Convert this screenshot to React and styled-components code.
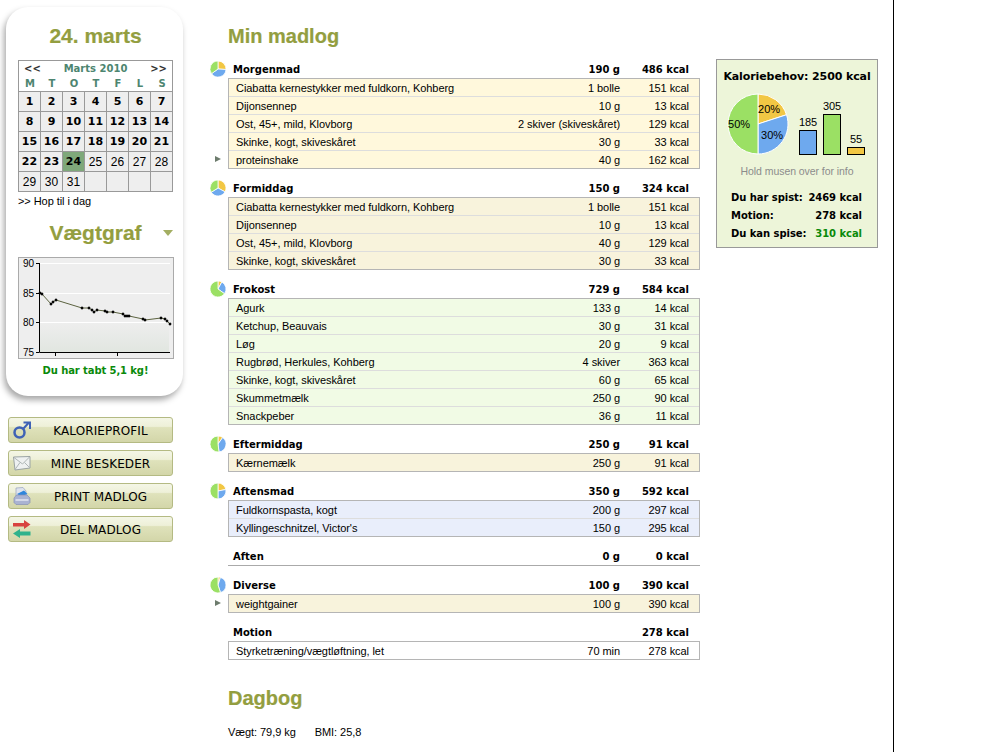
import styled, { createGlobalStyle } from 'styled-components';

const GlobalStyle = createGlobalStyle`
	html, body {
		margin: 0;
		padding: 0;
		background: #fff;
	}
	body {
		font-family: "Liberation Sans", Tahoma, sans-serif;
		font-size: 11px;
		letter-spacing: -0.06px;
		color: #000;
		overflow: hidden;
	}
`;

const BOLD_FONT = '"DejaVu Sans", Tahoma, sans-serif';
const COLORS = { green: '#9be064', yellow: '#f2c744', blue: '#6ea9ee' };

// slices: [yellow, blue, green], clockwise from 12 o'clock
const meals = [
	{
		name: 'Morgenmad', grams: '190 g', kcal: '486 kcal', tone: 'yellow',
		pie: [26, 39, 35],
		rows: [
			['Ciabatta kernestykker med fuldkorn, Kohberg', '1 bolle', '151 kcal'],
			['Dijonsennep', '10 g', '13 kcal'],
			['Ost, 45+, mild, Klovborg', '2 skiver (skiveskåret)', '129 kcal'],
			['Skinke, kogt, skiveskåret', '30 g', '33 kcal'],
			['proteinshake', '40 g', '162 kcal', true],
		],
	},
	{
		name: 'Formiddag', grams: '150 g', kcal: '324 kcal', tone: 'tan',
		pie: [33, 33, 34],
		rows: [
			['Ciabatta kernestykker med fuldkorn, Kohberg', '1 bolle', '151 kcal'],
			['Dijonsennep', '10 g', '13 kcal'],
			['Ost, 45+, mild, Klovborg', '40 g', '129 kcal'],
			['Skinke, kogt, skiveskåret', '30 g', '33 kcal'],
		],
	},
	{
		name: 'Frokost', grams: '729 g', kcal: '584 kcal', tone: 'green',
		pie: [8, 27, 65],
		rows: [
			['Agurk', '133 g', '14 kcal'],
			['Ketchup, Beauvais', '30 g', '31 kcal'],
			['Løg', '20 g', '9 kcal'],
			['Rugbrød, Herkules, Kohberg', '4 skiver', '363 kcal'],
			['Skinke, kogt, skiveskåret', '60 g', '65 kcal'],
			['Skummetmælk', '250 g', '90 kcal'],
			['Snackpeber', '36 g', '11 kcal'],
		],
	},
	{
		name: 'Eftermiddag', grams: '250 g', kcal: '91 kcal', tone: 'tan',
		pie: [10, 38, 52],
		rows: [['Kærnemælk', '250 g', '91 kcal']],
	},
	{
		name: 'Aftensmad', grams: '350 g', kcal: '592 kcal', tone: 'blue',
		pie: [22, 28, 50],
		rows: [
			['Fuldkornspasta, kogt', '200 g', '297 kcal'],
			['Kyllingeschnitzel, Victor\'s', '150 g', '295 kcal'],
		],
	},
	{ name: 'Aften', grams: '0 g', kcal: '0 kcal', rows: [] },
	{
		name: 'Diverse', grams: '100 g', kcal: '390 kcal', tone: 'tan',
		pie: [5, 40, 55],
		rows: [['weightgainer', '100 g', '390 kcal', true]],
	},
	{
		name: 'Motion', grams: '', kcal: '278 kcal', tone: 'white',
		rows: [['Styrketræning/vægtløftning, let', '70 min', '278 kcal']],
	},
];

const calendarDays = Array.from({ length: 31 }, (_, i) => i + 1);

const slicePath = (cx, cy, r, from, to) => {
	const a0 = (from / 100) * 2 * Math.PI - Math.PI / 2;
	const a1 = (to / 100) * 2 * Math.PI - Math.PI / 2;
	const large = to - from > 50 ? 1 : 0;
	return `M${cx} ${cy}L${cx + r * Math.cos(a0)} ${cy + r * Math.sin(a0)}A${r} ${r} 0 ${large} 1 ${cx + r * Math.cos(a1)} ${cy + r * Math.sin(a1)}Z`;
};

const MiniPie = ({ slices }) => {
	const [yellow, blue] = slices;
	return (
		<PieIcon width='16' height='16' viewBox='0 0 16 16'>
			<path d={slicePath(8, 8, 8, 0, yellow)} fill={COLORS.yellow} stroke='#fff' strokeWidth='0.8' />
			<path d={slicePath(8, 8, 8, yellow, yellow + blue)} fill={COLORS.blue} stroke='#fff' strokeWidth='0.8' />
			<path d={slicePath(8, 8, 8, yellow + blue, 100)} fill={COLORS.green} stroke='#fff' strokeWidth='0.8' />
		</PieIcon>
	);
};

const weightPoints = [
	[40, 293], [42, 294], [51, 304], [53, 302], [56, 300], [82, 308], [89, 308], [92, 310],
	[94, 312], [97, 310], [105, 311], [107, 312], [113, 312], [123, 314], [125, 316], [127, 316],
	[129, 316], [143, 319], [145, 320], [161, 318], [165, 319], [167, 321], [170, 324],
];

const WeightChart = () => (
	<ChartFrame>
		<svg width='154' height='100' viewBox='19 258 154 100' style={{ display: 'block' }}>
			<defs>
				<linearGradient id='fade' x1='0' y1='0' x2='0' y2='1'>
					<stop offset='0' stopColor='#eeeeee' />
					<stop offset='1' stopColor='#e1e6e0' />
				</linearGradient>
			</defs>
			<rect x='19' y='258' width='154' height='100' fill='#eeeeee' />
			<rect x='40' y='322' width='129' height='30' fill='url(#fade)' />
			<path d='M39 263.5H170M39 293.5H170M39 322.5H170' stroke='#fff' strokeWidth='1' />
			<path d='M39.5 263V352.500H170M36 263.500H39M36 293.500H39M36 322.500H39M36 352.500H39M55.500 352V356M117.500 352V356' stroke='#000' strokeWidth='1' fill='none' />
			<g fontFamily='"Liberation Sans", sans-serif' fontSize='10' fill='#000' textAnchor='end'>
				<text x='34' y='267'>90</text>
				<text x='34' y='297'>85</text>
				<text x='34' y='326'>80</text>
				<text x='34' y='356'>75</text>
			</g>
			<polyline points={weightPoints.map((p) => p.join(',')).join(' ')} fill='none' stroke='#5c6340' strokeWidth='1' />
			{weightPoints.map(([x, y]) => (
				<rect key={`${x}-${y}`} x={x - 1.2} y={y - 1.2} width='2.4' height='2.4' fill='#000' transform={`rotate(45 ${x} ${y})`} />
			))}
		</svg>
	</ChartFrame>
);

const EnergyChart = () => (
	<EnergyWrap width='146' height='66' viewBox='724 92 146 66'>
		<path d={slicePath(758, 124, 30, 0, 20)} fill={COLORS.yellow} stroke='#fff' />
		<path d={slicePath(758, 124, 30, 20, 50)} fill={COLORS.blue} stroke='#fff' />
		<path d={slicePath(758, 124, 30, 50, 100)} fill={COLORS.green} stroke='#fff' />
		<g fontFamily='"Liberation Sans", sans-serif' fontSize='11' fill='#000' textAnchor='middle'>
			<text x='769' y='113'>20%</text>
			<text x='772' y='139'>30%</text>
			<text x='739' y='128'>50%</text>
			<text x='808' y='126'>185</text>
			<text x='832' y='110'>305</text>
			<text x='856' y='143'>55</text>
		</g>
		<rect x='799.5' y='130.5' width='17' height='24' fill={COLORS.blue} stroke='#000' />
		<rect x='823.5' y='114.5' width='17' height='40' fill={COLORS.green} stroke='#000' />
		<rect x='847.5' y='147.5' width='17' height='7' fill={COLORS.yellow} stroke='#000' />
	</EnergyWrap>
);

const GenderIcon = () => (
	<svg width='18' height='18' viewBox='0 0 18 18'>
		<circle cx='6.500' cy='11.500' r='5' fill='none' stroke='#3f62b5' strokeWidth='2.500' />
		<path d='M10 8L15.500 2M10.500 1.500H17V8' fill='none' stroke='#3f62b5' strokeWidth='2' />
	</svg>
);

const MailIcon = () => (
	<svg width='18' height='15' viewBox='0 0 18 15'>
		<path d='M0.500 1L17 0.500V12L2 14Z' fill='#eef1f1' stroke='#9aa3a3' />
		<path d='M1 1.500L9.500 8L16.500 1M2 13.500L7 6.500M16.500 11.500L11.500 6.500' fill='none' stroke='#aeb6b6' />
	</svg>
);

const PrinterIcon = () => (
	<svg width='18' height='18' viewBox='0 0 18 18'>
		<path d='M3 1L10 0.500L13 4V9H3Z' fill='#dfe4ee' stroke='#97a1bd' strokeWidth='0.7' />
		<path d='M4 7L11 3.500L14.500 7L8 9.500Z' fill='#2f86dc' />
		<path d='M1 11L3.500 8H14L17 11V15.500L15 17.500H3L1 15.500Z' fill='#aab3d2' stroke='#8791b4' strokeWidth='0.7' />
		<path d='M2.500 13H15.500' stroke='#e2e6f0' strokeWidth='1.500' />
	</svg>
);

const ShareIcon = () => (
	<svg width='18' height='18' viewBox='0 0 18 18'>
		<path d='M0 3H11V0L17.500 4.500L11 9V6.500H0Z' fill='#d8433f' />
		<path d='M17.500 11.500H7V9L0 13.500L7 18V15.500H17.500Z' fill='#2fb28c' />
	</svg>
);

const App = () => (
	<>
		<GlobalStyle />
		<Page>
			<Sidebar>
				<Card>
					<DateTitle>24. marts</DateTitle>
					<Calendar>
						<CalendarNav>
							<span>&lt;&lt;</span>
							<CalendarMonth>Marts 2010</CalendarMonth>
							<span>&gt;&gt;</span>
						</CalendarNav>
						<WeekRow>
							{['M', 'T', 'O', 'T', 'F', 'L', 'S'].map((d, i) => (
								<span key={i}>{d}</span>
							))}
						</WeekRow>
						<DayGrid>
							{calendarDays.map((d) => (
								<Day key={d} $logged={d <= 24} $today={d === 24}>{d}</Day>
							))}
							{[1, 2, 3, 4].map((d) => <Day key={`empty-${d}`} />)}
						</DayGrid>
					</Calendar>
					<TodayLink>&gt;&gt; Hop til i dag</TodayLink>
					<GraphTitle>
						Vægtgraf
						<Caret />
					</GraphTitle>
					<WeightChart />
					<LostText>Du har tabt 5,1 kg!</LostText>
				</Card>
				<Buttons>
					<ActionButton><ButtonIcon><GenderIcon /></ButtonIcon>KALORIEPROFIL</ActionButton>
					<ActionButton><ButtonIcon><MailIcon /></ButtonIcon>MINE BESKEDER</ActionButton>
					<ActionButton><ButtonIcon><PrinterIcon /></ButtonIcon>PRINT MADLOG</ActionButton>
					<ActionButton><ButtonIcon><ShareIcon /></ButtonIcon>DEL MADLOG</ActionButton>
				</Buttons>
			</Sidebar>
			<Main>
				<Heading>Min madlog</Heading>
				{meals.map((meal) => (
					<Meal key={meal.name}>
						<MealHeader $flat={meal.rows.length === 0}>
							{meal.pie && <MiniPie slices={meal.pie} />}
							<MealName>{meal.name}</MealName>
							<Amount>{meal.grams}</Amount>
							<Kcal>{meal.kcal}</Kcal>
						</MealHeader>
						{meal.rows.length > 0 && (
							<RowBox $tone={meal.tone}>
								{meal.rows.map(([food, amount, kcal, marked]) => (
									<Row key={food}>
										{marked && <RowMarker />}
										<Food>{food}</Food>
										<Amount>{amount}</Amount>
										<Kcal>{kcal}</Kcal>
									</Row>
								))}
							</RowBox>
						)}
					</Meal>
				))}
				<DiaryHeading>Dagbog</DiaryHeading>
				<DiaryLine>
					<span>Vægt: 79,9 kg</span>
					<span>BMI: 25,8</span>
				</DiaryLine>
			</Main>
			<Summary>
				<SummaryTitle>Kaloriebehov: 2500 kcal</SummaryTitle>
				<EnergyChart />
				<Hint>Hold musen over for info</Hint>
				<Totals>
					<TotalLine><span>Du har spist:</span><span>2469 kcal</span></TotalLine>
					<TotalLine><span>Motion:</span><span>278 kcal</span></TotalLine>
					<TotalLine><span>Du kan spise:</span><em>310 kcal</em></TotalLine>
				</Totals>
			</Summary>
		</Page>
	</>
);

const Page = styled.div`
	display: flex;
	align-items: flex-start;
	box-sizing: border-box;
	width: 894px;
	height: 752px;
	overflow: hidden;
	border-right: 1px solid #000;
`;

const Sidebar = styled.aside`
	width: 173px;
	margin-left: 6px;
	padding-top: 7px;
	flex-shrink: 0;
`;

const Card = styled.div`
	box-sizing: border-box;
	width: 177px;
	height: 389px;
	padding: 0 10px 0 12px;
	background: #fff;
	border-radius: 22px;
	box-shadow: -2px 4px 6px rgba(0, 0, 0, 0.35);
`;

const Title = styled.h2`
	margin: 0;
	font-family: "Liberation Sans", Arial, sans-serif;
	font-size: 20px;
	font-weight: bold;
	letter-spacing: 0;
	color: #939e40;
	-webkit-text-stroke: 0.2px #939e40;
`;

const DateTitle = styled(Title)`
	text-align: center;
	font-size: 21px;
	line-height: 23px;
	padding-top: 17px;
	margin-bottom: 13px;
`;

const Calendar = styled.div`
	box-sizing: border-box;
	width: 155px;
	border: 1px solid #999;
	font-family: ${BOLD_FONT};
	letter-spacing: 0;
`;

const CalendarNav = styled.div`
	display: flex;
	justify-content: space-between;
	padding: 1px 5px 0;
	line-height: 14px;
	font-size: 10px;
	font-weight: bold;
	color: #333;
`;

const CalendarMonth = styled.span`
	color: #4d8570;
`;

const WeekRow = styled.div`
	display: grid;
	grid-template-columns: repeat(7, 22px);
	line-height: 15px;
	text-align: center;
	font-size: 10px;
	font-weight: bold;
	color: #4d8570;
`;

const DayGrid = styled.div`
	display: grid;
	grid-template-columns: repeat(7, 21px);
	grid-auto-rows: 19px;
	gap: 1px;
	background: #999;
	border-top: 1px solid #999;
`;

const Day = styled.div`
	display: flex;
	align-items: center;
	justify-content: center;
	font-family: ${(p) => (p.$logged ? BOLD_FONT : '"Liberation Sans", sans-serif')};
	font-size: ${(p) => (p.$logged ? '11px' : '12px')};
	font-weight: ${(p) => (p.$logged ? 'bold' : 'normal')};
	background: ${(p) => (p.$today ? '#7fa87a' : '#eeeeee')};
`;

const TodayLink = styled.div`
	margin-top: 2px;
	line-height: 14px;
`;

const GraphTitle = styled(Title)`
	position: relative;
	text-align: center;
	font-size: 21px;
	line-height: 23px;
	margin-top: 13px;
	margin-bottom: 13px;
`;

const Caret = styled.span`
	position: absolute;
	right: 0;
	top: 9px;
	border: 5px solid transparent;
	border-top: 6px solid #a3ae62;
	border-bottom: 0;
`;

const ChartFrame = styled.div`
	box-sizing: border-box;
	width: 156px;
	border: 1px solid #aaa;
`;

const LostText = styled.div`
	margin-top: 6px;
	text-align: center;
	font-family: ${BOLD_FONT};
	font-size: 10px;
	font-weight: bold;
	letter-spacing: -0.1px;
	color: #0a8a0a;
`;

const Buttons = styled.div`
	display: flex;
	flex-direction: column;
	gap: 7px;
	margin: 21px 0 0 2px;
	width: 165px;
`;

const ActionButton = styled.div`
	position: relative;
	display: flex;
	align-items: center;
	justify-content: center;
	box-sizing: border-box;
	height: 26px;
	padding: 1px 0 0 20px;
	border: 1px solid #b4ba83;
	border-radius: 3px;
	font-family: ${BOLD_FONT};
	font-size: 12px;
	letter-spacing: 0.1px;
	background: linear-gradient(#f4f6e6 0%, #eef0d8 35%, #dfe2bb 40%, #d3d6a9 100%);
`;

const ButtonIcon = styled.span`
	position: absolute;
	display: flex;
	align-items: center;
	justify-content: center;
	left: 4px;
	top: 3px;
	width: 18px;
	height: 18px;
`;

const Main = styled.main`
	width: 490px;
	margin-left: 31px;
	padding-top: 25px;
	flex-shrink: 0;
`;

const Heading = styled(Title)`
	line-height: 23px;
	margin: 0 0 11px 18px;
`;

const Meal = styled.section`
	margin-bottom: 9px;
`;

const MealHeader = styled.div`
	position: relative;
	display: flex;
	align-items: center;
	box-sizing: border-box;
	height: ${(p) => (p.$flat ? '20px' : '19px')};
	margin-left: 18px;
	padding: 2px 11px 0 0;
	font-family: ${BOLD_FONT};
	font-size: 10px;
	font-weight: bold;
	letter-spacing: 0;
	${(p) => p.$flat && 'border-bottom: 1px solid #aaa;'}
`;

const PieIcon = styled.svg`
	position: absolute;
	left: -18px;
	top: 2px;
`;

const MealName = styled.span`
	flex: 1;
	padding-left: 5px;
`;

const TONES = {
	yellow: '#fff8dc',
	tan: '#f8f3dc',
	green: '#f1fbe5',
	blue: '#e9eefb',
	white: '#fff',
};

const RowBox = styled.div`
	margin-left: 18px;
	border: 1px solid #b5b5b5;
	background: ${(p) => TONES[p.$tone]};
`;

const Row = styled.div`
	position: relative;
	display: flex;
	align-items: center;
	box-sizing: border-box;
	height: 18px;
	padding: 0 10px 0 7px;
	border-bottom: 1px solid #dddddd;
	&:last-child {
		border-bottom: 0;
		height: 17px;
	}
`;

const RowMarker = styled.span`
	position: absolute;
	left: -14px;
	top: 5px;
	border: 3px solid transparent;
	border-left: 6px solid #6d7c6d;
	border-right: 0;
`;

const Food = styled.span`
	flex: 1;
	white-space: nowrap;
`;

const Amount = styled.span`
	white-space: nowrap;
	text-align: right;
`;

const Kcal = styled.span`
	width: 69px;
	white-space: nowrap;
	text-align: right;
`;

const DiaryHeading = styled(Title)`
	line-height: 23px;
	margin: 27px 0 0 18px;
`;

const DiaryLine = styled.div`
	display: flex;
	gap: 19px;
	margin: 16px 0 0 18px;
`;

const Summary = styled.aside`
	box-sizing: border-box;
	width: 162px;
	height: 189px;
	margin: 59px 0 0 16px;
	padding-top: 9px;
	flex-shrink: 0;
	background: #edf5d9;
	border: 1px solid #999;
`;

const SummaryTitle = styled.div`
	text-align: center;
	font-family: ${BOLD_FONT};
	font-size: 11px;
	font-weight: bold;
	letter-spacing: -0.1px;
	line-height: 15px;
	margin-bottom: 8px;
`;

const EnergyWrap = styled.svg`
	display: block;
	margin-left: 7px;
`;

const Hint = styled.div`
	margin-top: 7px;
	text-align: center;
	font-size: 10.5px;
	color: #8c8c8c;
`;

const Totals = styled.div`
	display: flex;
	flex-direction: column;
	margin: 12px 15px 0 14px;
	font-family: ${BOLD_FONT};
	font-size: 10px;
	font-weight: bold;
	letter-spacing: -0.05px;
`;

const TotalLine = styled.div`
	display: flex;
	justify-content: space-between;
	line-height: 18px;
	em {
		font-style: normal;
		color: #0a8a0a;
	}
`;

export default App;
